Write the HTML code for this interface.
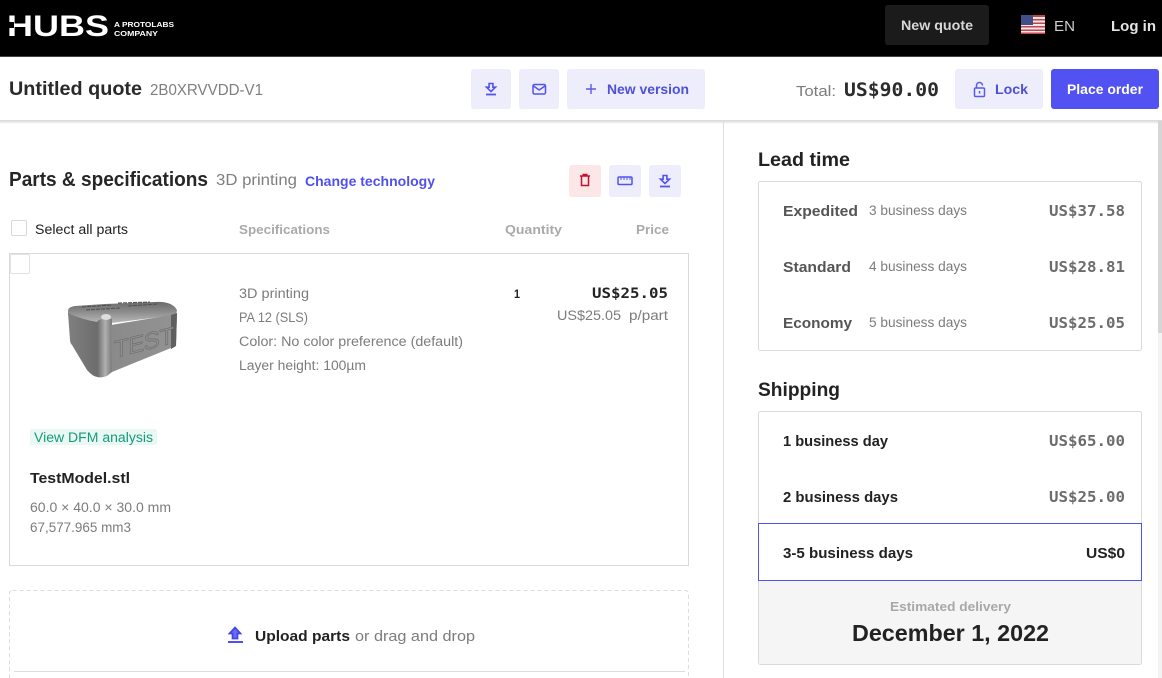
<!DOCTYPE html>
<html><head><meta charset="utf-8"><title>Hubs quote</title>
<style>
html,body{margin:0;padding:0;width:1162px;height:678px;overflow:hidden;background:#fff}
svg{display:block;font-family:"Liberation Sans",sans-serif}
.b{font-weight:700}
.m{font-family:"DejaVu Sans Mono",monospace;font-weight:700}
</style></head><body>
<svg width="1162" height="678" viewBox="0 0 1162 678" xmlns="http://www.w3.org/2000/svg">
<defs>
<linearGradient id="shadow" x1="0" y1="0" x2="0" y2="1"><stop offset="0" stop-color="#ddd"/><stop offset="1" stop-color="#fff"/></linearGradient>
<linearGradient id="topf" x1="0" y1="0" x2="0" y2="1"><stop offset="0" stop-color="#6a6a6a"/><stop offset=".45" stop-color="#8c8c8c"/><stop offset="1" stop-color="#bdbdbd"/></linearGradient>
<linearGradient id="leftf" x1="0" y1="0" x2="1" y2="0"><stop offset="0" stop-color="#808080"/><stop offset="1" stop-color="#6c6c6c"/></linearGradient>
<linearGradient id="corner" x1="0" y1="0" x2="1" y2="0"><stop offset="0" stop-color="#696969"/><stop offset=".55" stop-color="#b0b0b0"/><stop offset="1" stop-color="#7a7a7a"/></linearGradient>
<linearGradient id="frontf" x1="0" y1="0" x2="1" y2="0"><stop offset="0" stop-color="#8a8a8a"/><stop offset="1" stop-color="#939393"/></linearGradient>
<g id="dl"><path d="M-1.900-5.500h3.800v3.700H4.500L0 2.500-4.500-1.800h2.600z" fill="none" stroke="#5353f0" stroke-width="1.600"/><path d="M-5 5.500h10" stroke="#5353f0" stroke-width="1.800"/></g>
</defs>

<!-- top bar -->
<rect width="1162" height="56" fill="#000"/>
<rect y="56" width="1162" height="1" fill="#444"/>
<text x="7" y="36" class="b" font-size="30" fill="#fff" textLength="102" lengthAdjust="spacingAndGlyphs">HUBS</text>
<rect x="7" y="22" width="7" height="6" fill="#000"/>
<text x="114" y="27" class="b" font-size="7.500" fill="#fff" textLength="60" lengthAdjust="spacingAndGlyphs">A PROTOLABS</text>
<text x="114" y="36" class="b" font-size="7.500" fill="#fff" textLength="44" lengthAdjust="spacingAndGlyphs">COMPANY</text>
<rect x="885" y="5" width="104" height="40" rx="3" fill="#1b1b1b"/>
<text x="901" y="30" class="b" font-size="14" fill="#d8d8d8" textLength="72" lengthAdjust="spacingAndGlyphs">New quote</text>
<!-- flag -->
<g>
<rect x="1021" y="15" width="24" height="19" fill="#f0e8e8"/>
<g fill="#c4444c"><rect x="1021" y="15" width="24" height="2"/><rect x="1021" y="19" width="24" height="1.500"/><rect x="1021" y="22.500" width="24" height="1.500"/><rect x="1021" y="26" width="24" height="1.500"/><rect x="1021" y="29.500" width="24" height="1.500"/><rect x="1021" y="32.500" width="24" height="1.500"/></g>
<rect x="1021" y="15" width="12" height="10" fill="#434e86"/>
</g>
<text x="1054" y="31" font-size="15" fill="#cfcfcf" textLength="21" lengthAdjust="spacingAndGlyphs">EN</text>
<text x="1111" y="31" class="b" font-size="15" fill="#e4e4e4" textLength="45" lengthAdjust="spacingAndGlyphs">Log in</text>

<!-- sub header -->
<rect y="120" width="1162" height="1" fill="#dcdcdc"/>
<rect y="121" width="1162" height="3" fill="url(#shadow)"/>
<text x="9" y="95" class="b" font-size="19" fill="#2a2a2a" textLength="133" lengthAdjust="spacingAndGlyphs">Untitled quote</text>
<text x="150" y="95" font-size="16" fill="#7f7f7f" textLength="113" lengthAdjust="spacingAndGlyphs">2B0XRVVDD-V1</text>

<rect x="471" y="69" width="40" height="40" rx="3" fill="#ededfb"/>
<use href="#dl" x="491" y="89"/>
<rect x="519" y="69" width="40" height="40" rx="3" fill="#ededfb"/>
<rect x="533" y="84.500" width="12.500" height="9.500" rx="1.500" fill="none" stroke="#5353f0" stroke-width="1.500"/>
<path d="M533.500 86l5.700 4 5.800-4" fill="none" stroke="#5353f0" stroke-width="1.500"/>
<rect x="567" y="69" width="138" height="40" rx="3" fill="#ededfb"/>
<path d="M591 84v10M586 89h10" stroke="#5b5be8" stroke-width="1.400"/>
<text x="607" y="94" class="b" font-size="14" fill="#4f4fd8" textLength="82" lengthAdjust="spacingAndGlyphs">New version</text>

<text x="796" y="96" font-size="15" fill="#7b7b7b" textLength="40" lengthAdjust="spacingAndGlyphs">Total:</text>
<text x="844" y="96" class="m" font-size="18.500" fill="#2c2c2c" textLength="95" lengthAdjust="spacingAndGlyphs">US$90.00</text>

<rect x="955" y="69" width="88" height="40" rx="3" fill="#ededfb"/>
<rect x="974.500" y="88" width="10" height="8.500" rx="1" fill="none" stroke="#5b5be8" stroke-width="1.500"/>
<path d="M976.500 88v-2.500a3 3 0 0 1 6 0" fill="none" stroke="#5b5be8" stroke-width="1.500"/>
<rect x="978.800" y="91" width="1.500" height="2.500" fill="#5b5be8"/>
<text x="995" y="94" class="b" font-size="14" fill="#4f4fd8" textLength="33" lengthAdjust="spacingAndGlyphs">Lock</text>
<rect x="1051" y="69" width="108" height="40" rx="3" fill="#5252f2"/>
<text x="1067" y="94" class="b" font-size="14" fill="#fff" textLength="76" lengthAdjust="spacingAndGlyphs">Place order</text>

<!-- dividers / scrollbar -->
<rect x="723" y="121" width="1" height="557" fill="#dedede"/>
<rect x="1158" y="121" width="4" height="557" fill="#f3f3f3"/>
<rect x="1158" y="121" width="4" height="212" fill="#d6d6d6"/>

<!-- left heading -->
<text x="9" y="186" class="b" font-size="20" fill="#262626" textLength="199" lengthAdjust="spacingAndGlyphs">Parts &amp; specifications</text>
<text x="216" y="185" font-size="16" fill="#7f7f7f" textLength="81" lengthAdjust="spacingAndGlyphs">3D printing</text>
<text x="305" y="186" class="b" font-size="14" fill="#5050ee" textLength="130" lengthAdjust="spacingAndGlyphs">Change technology</text>

<rect x="569" y="165" width="32" height="32" rx="3" fill="#fbe6e8"/>
<path d="M580 176h10M581.500 176v9.500h7V176M582.500 174.500h5" fill="none" stroke="#c3112f" stroke-width="1.500"/>
<rect x="609" y="165" width="32" height="32" rx="3" fill="#ededfb"/>
<rect x="618" y="177" width="14" height="7.500" rx="1" fill="none" stroke="#5353f0" stroke-width="1.500"/>
<path d="M621 177v3M624 177v3M627 177v3M630 177v3" stroke="#5353f0" stroke-width="1"/>
<rect x="649" y="165" width="32" height="32" rx="3" fill="#ededfb"/>
<use href="#dl" x="665" y="181"/>

<!-- table header -->
<rect x="11.500" y="220.500" width="15" height="15" rx="1.500" fill="#fff" stroke="#d8d8d8"/>
<text x="35" y="234" font-size="13.500" fill="#1e1e1e" textLength="93" lengthAdjust="spacingAndGlyphs">Select all parts</text>
<text x="239" y="234" class="b" font-size="13" fill="#aaa" textLength="91" lengthAdjust="spacingAndGlyphs">Specifications</text>
<text x="505" y="234" class="b" font-size="13" fill="#aaa" textLength="57" lengthAdjust="spacingAndGlyphs">Quantity</text>
<text x="636" y="234" class="b" font-size="13" fill="#aaa" textLength="33" lengthAdjust="spacingAndGlyphs">Price</text>

<!-- part card -->
<rect x="9.500" y="253.500" width="679" height="312" fill="#fff" stroke="#d9d9d9"/>
<rect x="10.500" y="254.500" width="19" height="19" rx="1" fill="#fff" stroke="#e2e2e2"/>

<!-- 3d model -->
<path d="M68 311q0-4 7-5l30-2 50-2q17-1 22 8l-1 5-64 8-14 1q-16-3-30-9z" fill="url(#topf)"/>
<path d="M82 307l30-2M86 310l34-2M118 303l32-1M128 306l30-2" stroke="#505050" stroke-width="1" fill="none" stroke-dasharray="4 1"/>
<path d="M68 313q12 6 29 9l1 55q-5 0-11-7L72 345q-2-2-2-5z" fill="url(#leftf)"/>
<path d="M97 322q2-4 15-3v53l-5 4q-5 2-10 1z" fill="url(#corner)"/>
<ellipse cx="106" cy="317" rx="5" ry="3" fill="#dedede"/>
<path d="M111 325l66-11-1 32-64 26z" fill="url(#frontf)"/>
<path d="M171 315l6-2-1 33-5 3z" fill="#5f5f5f"/>
<text transform="translate(114 358) skewY(-14)" font-size="24" fill="#8f8f8f" stroke="#6a6a6a" stroke-width=".6" textLength="60" lengthAdjust="spacing">TEST</text>

<text x="239" y="298" font-size="13.500" fill="#7c7c7c" textLength="70" lengthAdjust="spacingAndGlyphs">3D printing</text>
<text x="239" y="322" font-size="14" fill="#7c7c7c" textLength="69" lengthAdjust="spacingAndGlyphs">PA 12 (SLS)</text>
<text x="239" y="346" font-size="13.500" fill="#7c7c7c" textLength="224" lengthAdjust="spacingAndGlyphs">Color: No color preference (default)</text>
<text x="239" y="370" font-size="13.500" fill="#7c7c7c" textLength="127" lengthAdjust="spacingAndGlyphs">Layer height: 100µm</text>

<text x="514" y="298" class="b" font-size="12" fill="#222" textLength="6" lengthAdjust="spacingAndGlyphs">1</text>
<text x="592" y="298" class="m" font-size="14" fill="#232323" textLength="76" lengthAdjust="spacingAndGlyphs">US$25.05</text>
<text x="557" y="320" font-size="13.500" fill="#7c7c7c" textLength="64" lengthAdjust="spacingAndGlyphs">US$25.05</text>
<text x="629" y="320" font-size="13.500" fill="#7c7c7c" textLength="39" lengthAdjust="spacingAndGlyphs">p/part</text>

<rect x="30" y="429" width="127" height="16" rx="2" fill="#eaf8f3"/>
<text x="34" y="442" font-size="13.500" fill="#179a7c" textLength="119" lengthAdjust="spacingAndGlyphs">View DFM analysis</text>
<text x="30" y="483" class="b" font-size="15" fill="#222" textLength="100" lengthAdjust="spacingAndGlyphs">TestModel.stl</text>
<text x="30" y="512" font-size="13.500" fill="#7c7c7c" textLength="141" lengthAdjust="spacingAndGlyphs">60.0 × 40.0 × 30.0 mm</text>
<text x="30" y="532" font-size="13.500" fill="#7c7c7c" textLength="101" lengthAdjust="spacingAndGlyphs">67,577.965 mm3</text>

<!-- upload -->
<rect x="9.500" y="590.500" width="679" height="100" rx="3" fill="#fff" stroke="#dcdcdc" stroke-dasharray="4 3"/>
<path d="M235 627.500l5.500 6h-3v5h-5v-5h-3z" fill="#6a6af2" stroke="#4545e6" stroke-width="1.700"/>
<rect x="228" y="641" width="15" height="2" fill="#5050ee"/>
<text x="255" y="641" class="b" font-size="15" fill="#222" textLength="95" lengthAdjust="spacingAndGlyphs">Upload parts</text>
<text x="355" y="641" font-size="15" fill="#7c7c7c" textLength="120" lengthAdjust="spacingAndGlyphs">or drag and drop</text>
<rect x="14" y="671" width="671" height="1" fill="#dcdcdc"/>

<!-- lead time -->
<text x="758" y="166" class="b" font-size="19" fill="#222" textLength="92" lengthAdjust="spacingAndGlyphs">Lead time</text>
<rect x="758.500" y="181.500" width="383" height="169" rx="2" fill="#fff" stroke="#dadada"/>
<text x="783" y="216" class="b" font-size="15" fill="#555" textLength="75" lengthAdjust="spacingAndGlyphs">Expedited</text>
<text x="869" y="215" font-size="13.500" fill="#7c7c7c" textLength="98" lengthAdjust="spacingAndGlyphs">3 business days</text>
<text x="1049" y="216" class="m" font-size="15" fill="#6c6c6c" textLength="76" lengthAdjust="spacingAndGlyphs">US$37.58</text>
<text x="783" y="272" class="b" font-size="15" fill="#555" textLength="68" lengthAdjust="spacingAndGlyphs">Standard</text>
<text x="869" y="271" font-size="13.500" fill="#7c7c7c" textLength="98" lengthAdjust="spacingAndGlyphs">4 business days</text>
<text x="1049" y="272" class="m" font-size="15" fill="#6c6c6c" textLength="76" lengthAdjust="spacingAndGlyphs">US$28.81</text>
<text x="783" y="328" class="b" font-size="15" fill="#555" textLength="69" lengthAdjust="spacingAndGlyphs">Economy</text>
<text x="869" y="327" font-size="13.500" fill="#7c7c7c" textLength="98" lengthAdjust="spacingAndGlyphs">5 business days</text>
<text x="1049" y="328" class="m" font-size="15" fill="#6c6c6c" textLength="76" lengthAdjust="spacingAndGlyphs">US$25.05</text>

<!-- shipping -->
<text x="758" y="396" class="b" font-size="19" fill="#222" textLength="82" lengthAdjust="spacingAndGlyphs">Shipping</text>
<rect x="758.500" y="411.500" width="383" height="253" rx="2" fill="#fff" stroke="#dadada"/>
<text x="783" y="446" class="b" font-size="15" fill="#222" textLength="105" lengthAdjust="spacingAndGlyphs">1 business day</text>
<text x="1049" y="446" class="m" font-size="15" fill="#6c6c6c" textLength="76" lengthAdjust="spacingAndGlyphs">US$65.00</text>
<text x="783" y="502" class="b" font-size="15" fill="#222" textLength="115" lengthAdjust="spacingAndGlyphs">2 business days</text>
<text x="1049" y="502" class="m" font-size="15" fill="#6c6c6c" textLength="76" lengthAdjust="spacingAndGlyphs">US$25.00</text>
<rect x="759" y="581" width="382" height="83" fill="#f5f5f5"/>
<rect x="758.500" y="523.500" width="383" height="57" fill="#fff" stroke="#5252f2"/>
<text x="783" y="558" class="b" font-size="15" fill="#222" textLength="130" lengthAdjust="spacingAndGlyphs">3-5 business days</text>
<text x="1086" y="558" class="b" font-size="15" fill="#222" textLength="39" lengthAdjust="spacingAndGlyphs">US$0</text>
<text x="890" y="611" class="b" font-size="13" fill="#a8a8a8" textLength="121" lengthAdjust="spacingAndGlyphs">Estimated delivery</text>
<text x="852" y="641" class="b" font-size="23" fill="#222" textLength="197" lengthAdjust="spacingAndGlyphs">December 1, 2022</text>
</svg>
</body></html>
